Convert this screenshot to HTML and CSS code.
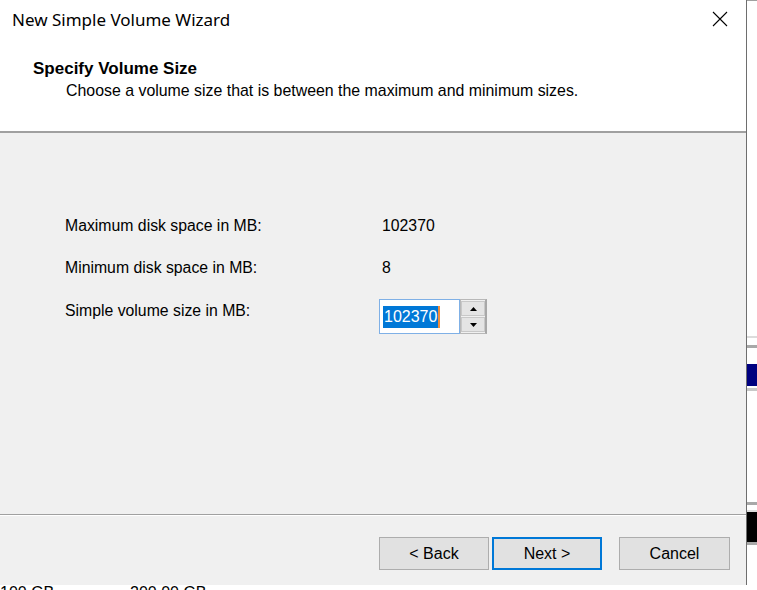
FILE: index.html
```html
<!DOCTYPE html>
<html>
<head>
<meta charset="utf-8">
<title>New Simple Volume Wizard</title>
<link rel="stylesheet" href="styles.css">
</head>
<body>
<div class="screen">
  <div class="top">
    <div class="window">
      <div class="titlebar">
        <span class="title">New Simple Volume Wizard</span>
        <svg class="close" width="16" height="16" viewBox="0 0 16 16"><path d="M1 1L15 15M15 1L1 15" stroke="#000" stroke-width="1.1" fill="none"/></svg>
      </div>
      <div class="header">
        <div class="h-title">Specify Volume Size</div>
        <div class="h-sub">Choose a volume size that is between the maximum and minimum sizes.</div>
      </div>
      <div class="content">
        <div class="row r1"><span class="label">Maximum disk space in MB:</span><span class="value">102370</span></div>
        <div class="row r2"><span class="label">Minimum disk space in MB:</span><span class="value">8</span></div>
        <div class="row r3">
          <span class="label l3">Simple volume size in MB:</span>
          <div class="spin">
            <div class="input"><span class="sel">102370</span><span class="caret"></span></div>
            <div class="spinbtns">
              <div class="sb"><svg width="7" height="4" viewBox="0 0 7 4"><path d="M3.5 0L7 4H0Z" fill="#000"/></svg></div>
              <div class="sb"><svg width="7" height="4" viewBox="0 0 7 4"><path d="M0 0H7L3.5 4Z" fill="#000"/></svg></div>
            </div>
          </div>
        </div>
      </div>
      <div class="footer">
        <div class="btn">&lt; Back</div>
        <div class="btn default">Next &gt;</div>
        <div class="btn cancel">Cancel</div>
      </div>
    </div>
    <div class="behind">
      <div class="b-top"></div>
      <div class="b-gap g1"></div>
      <div class="b-line light"></div>
      <div class="b-gap g2"></div>
      <div class="b-line dark"></div>
      <div class="b-gap g3"></div>
      <div class="b-navy"></div>
      <div class="b-line dark2"></div>
      <div class="b-gap g4"></div>
      <div class="b-line dark"></div>
      <div class="b-gap g5"></div>
      <div class="b-line light"></div>
      <div class="b-black"></div>
      <div class="b-line dark"></div>
    </div>
  </div>
  <div class="strip">
    <span class="s1">100 GB</span>
    <span class="s2">200.00 GB</span>
  </div>
</div>
</body>
</html>
```

FILE: styles.css
```css
html, body {
  margin: 0;
  padding: 0;
  background: #fff;
}
.screen {
  width: 757px;
  height: 590px;
  overflow: hidden;
  display: flex;
  flex-direction: column;
  font-family: "Liberation Sans", Arial, sans-serif;
  color: #000;
}
.top {
  display: flex;
  height: 585px;
}
.window {
  width: 746px;
  height: 585px;
  border-right: 1px solid #6e6e6e;
  display: flex;
  flex-direction: column;
  background: #f0f0f0;
}
.titlebar {
  height: 42px;
  background: #fff;
  display: flex;
  align-items: flex-start;
  justify-content: space-between;
}
.title {
  font-family: "Noto Sans", "Open Sans", sans-serif;
  font-size: 17px;
  margin: 8px 0 0 12px;
  line-height: 24px;
}
.close {
  margin: 11px 18px 0 0;
}
.header {
  height: 89px;
  background: #fff;
  border-bottom: 2px solid #a0a0a0;
  box-sizing: content-box;
}
.h-title {
  font-weight: bold;
  font-size: 17px;
  margin: 17px 0 0 33px;
  line-height: 20px;
}
.h-sub {
  font-size: 15.9px;
  margin: 2px 0 0 66px;
  line-height: 19px;
}
.content {
  height: 382px;
  padding: 84px 0 0 65px;
  box-sizing: border-box;
  border-bottom: 1px solid #a0a0a0;
  font-size: 15.8px;
}
.row {
  display: flex;
  align-items: flex-start;
  line-height: 18px;
}
.r1 { height: 42px; }
.r2 { height: 40px; }
.label { width: 314px; }
.value { margin-left: 3px; }
.l3 { margin-top: 3px; }
.spin {
  display: flex;
  height: 35px;
}
.input {
  height: 33px;
  border: 1px solid #7fb0e6;
  background: #fff;
  display: flex;
  align-items: center;
  padding: 1px 0 0 3px;
  box-sizing: border-box;
  height: 35px;
  width: 81px;
}
.sel {
  background: #0078d7;
  color: #fff;
  font-size: 16px;
  line-height: 22px;
  padding: 0 1px;
}
.caret {
  width: 2px;
  height: 22px;
  background: #f08c3c;
}
.spinbtns {
  width: 27px;
  border: 1px solid #b8b8b8;
  border-right: 2px solid #a8a8a8;
  background: #f0f0f0;
  display: flex;
  flex-direction: column;
  gap: 1px;
  padding: 1px 0 1px 0;
  box-sizing: border-box;
  height: 35px;
}
.sb {
  flex: 1;
  background: #e4e4e4;
  border: 1px solid #c8c8c8;
  display: flex;
  align-items: center;
  justify-content: center;
}
.footer {
  border-top: 1px solid #fff;
  flex: 1;
  display: flex;
  align-items: flex-start;
  padding: 21px 0 0 379px;
  box-sizing: border-box;
  gap: 3px;
}
.btn {
  width: 110px;
  height: 33px;
  box-sizing: border-box;
  border: 1px solid #adadad;
  background: #e1e1e1;
  font-size: 16px;
  display: flex;
  align-items: center;
  justify-content: center;
}
.btn.default {
  border: 2px solid #0078d7;
}
.btn.cancel {
  margin-left: 14px;
  width: 111px;
}
.behind {
  flex: 1;
  display: flex;
  flex-direction: column;
  background: #fff;
}
.b-top { height: 1px; background: #a0a0a0; }
.g1 { height: 335px; }
.b-line.light { height: 2px; background: #dcdcdc; }
.g2 { height: 7px; }
.b-line.dark { height: 3px; background: #a8a8a8; }
.g3 { height: 16px; }
.b-navy { height: 22px; background: #000080; }
.b-line.dark2 { height: 3px; background: #c8c8c8; margin-top: 2px; }
.g4 { height: 111px; }
.g5 { height: 5px; }
.b-black { height: 30px; background: #000; }
.strip {
  height: 5px;
  background: #fff;
  position: relative;
  overflow: hidden;
  font-size: 16px;
  line-height: 16px;
}
.s1, .s2 {
  position: absolute;
  top: 0px;
}
.s1 { left: 0; }
.s2 { left: 130px; }
```
